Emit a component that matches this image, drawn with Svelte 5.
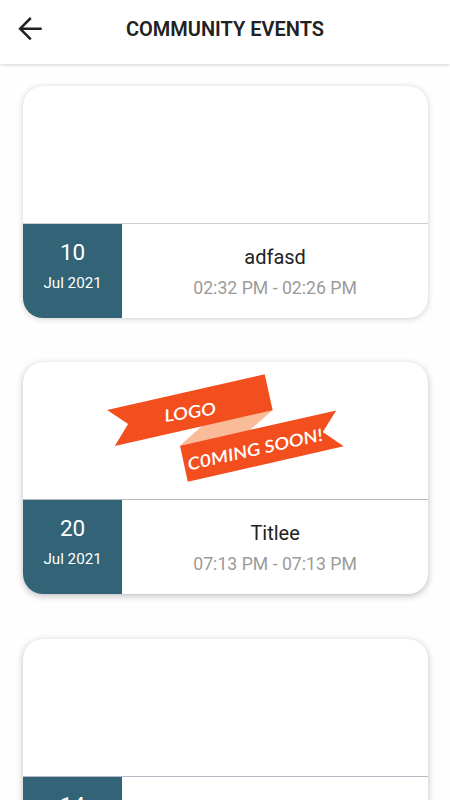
<script>
  const events = [
    { day: '10', month: 'Jul 2021', title: 'adfasd', time: '02:32 PM - 02:26 PM', banner: false, soft: true },
    { day: '20', month: 'Jul 2021', title: 'Titlee', time: '07:13 PM - 07:13 PM', banner: true, soft: false },
    { day: '14', month: '', title: '', time: '', banner: false, soft: false }
  ];
</script>

<div class="screen">
  <header>
    <button class="back" aria-label="Back">
      <svg width="24" height="24" viewBox="0 0 24 24" fill="none" stroke="#222" stroke-width="2.5">
        <path d="M23.7 11.7H2M12.8 1L2.1 11.7L12.8 22.4" />
      </svg>
    </button>
    <h1>COMMUNITY EVENTS</h1>
  </header>
  <main>
    {#each events as event}
      <article class:faint={event.soft}>
        <div class="cover" class:soft={event.soft}>
          {#if event.banner}
            <svg width="405" height="137" viewBox="22.5 362.5 405 137">
              <path fill="#fabb99" d="M179.5 446L202 426L272 410.8L249 431Z" />
              <path fill="#f34e1e" d="M106.6 410.5L264.2 374.7L272.2 410.7L114.3 446.4L127.6 424.5Z" />
              <path fill="#f34e1e" d="M179.5 446.2L335.7 410.9L322.3 432.4L343.2 446.7L187.3 482.2Z" />
              <text transform="translate(164.8 422.5) rotate(-8.5)" textLength="52" lengthAdjust="spacingAndGlyphs">LOGO</text>
              <text transform="translate(188.5 471) rotate(-12.6)" textLength="138" lengthAdjust="spacingAndGlyphs">C0MING SOON!</text>
            </svg>
          {/if}
        </div>
        <div class="info">
          <div class="date">
            <span class="day">{event.day}</span>
            <span class="month">{event.month}</span>
          </div>
          <div class="details">
            <span class="title">{event.title}</span>
            <span class="time">{event.time}</span>
          </div>
        </div>
      </article>
    {/each}
  </main>
</div>

<style>
  :global(body) {
    margin: 0;
    background: #fefefe;
  }
  .screen {
    height: 800px;
    overflow: hidden;
    display: flex;
    flex-direction: column;
    font-family: Roboto, sans-serif;
    background: #fefefe;
  }
  header {
    box-sizing: border-box;
    flex: none;
    height: 64px;
    display: grid;
    grid-template-columns: 60px 1fr 60px;
    background: #fff;
    box-shadow: 0 1px 3px rgba(0, 0, 0, 0.18);
  }
  .back {
    align-self: start;
    border: 0;
    padding: 17px 0 0 18px;
    background: none;
    text-align: left;
    line-height: 0;
  }
  h1 {
    margin: 0;
    text-align: center;
    font-size: 20px;
    font-weight: 600;
    line-height: 59px;
    color: #212121;
    white-space: nowrap;
  }
  main {
    padding: 22px 22.3px 0 22.7px;
    display: flex;
    flex-direction: column;
    gap: 44.5px;
  }
  article {
    flex: none;
    height: 231.8px;
    overflow: hidden;
    border-radius: 20px;
    background: #fff;
    box-shadow: 0 2px 7px rgba(0, 0, 0, 0.25), 0 0 1px rgba(0, 0, 0, 0.08);
  }
  article.faint {
    box-shadow: 0 1px 6px rgba(0, 0, 0, 0.18), 0 0 1px rgba(0, 0, 0, 0.08);
  }
  .cover {
    box-sizing: border-box;
    height: 138px;
    border-bottom: 1px solid #b3bbc4;
  }
  .cover.soft {
    border-color: #d0d0d0;
  }
  .cover svg {
    display: block;
  }
  .cover text {
    font: italic 600 17px Lato, sans-serif;
    fill: #fff;
  }
  .info {
    display: flex;
    height: 94px;
  }
  .date {
    width: 99.8px;
    display: flex;
    flex-direction: column;
    align-items: center;
    background: #326376;
    color: #fff;
  }
  .day {
    margin-top: 14px;
    font-size: 22.5px;
    line-height: 28px;
  }
  .month {
    margin-top: 7px;
    font-size: 15.2px;
    line-height: 20px;
  }
  .details {
    flex: 1;
    display: flex;
    flex-direction: column;
    align-items: center;
  }
  .title {
    margin-top: 19.5px;
    font-size: 20px;
    line-height: 26px;
    color: #222;
  }
  .time {
    margin-top: 7.5px;
    font-size: 17.7px;
    line-height: 22px;
    color: #9b9b9b;
  }
</style>
